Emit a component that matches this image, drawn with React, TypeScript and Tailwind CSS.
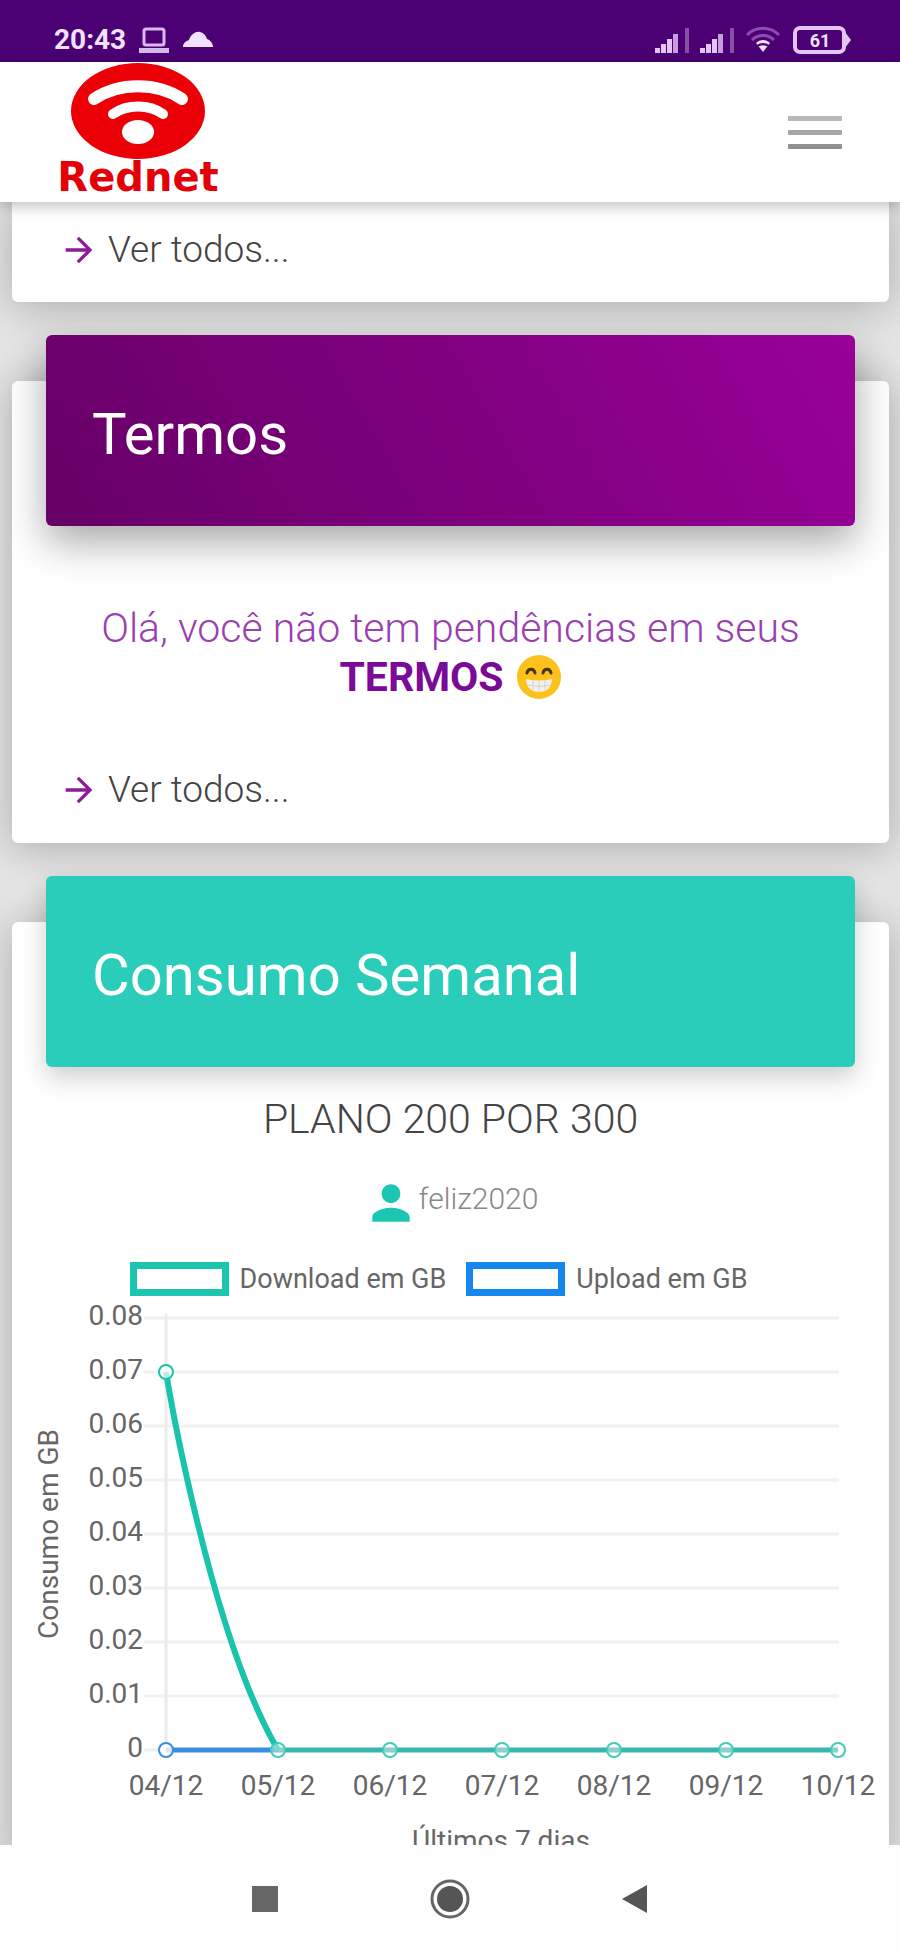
import type { ReactNode } from "react";
import { MdArrowForward, MdPerson } from "react-icons/md";

const days = ["04/12", "05/12", "06/12", "07/12", "08/12", "09/12", "10/12"];
const ticks = ["0.08", "0.07", "0.06", "0.05", "0.04", "0.03", "0.02", "0.01", "0"];

// chart geometry, in svg units
const LEFT = 154;
const STEP_X = 112;
const TOP = 22;
const STEP_Y = 54;
const BOTTOM = TOP + STEP_Y * 8;

function StatusBar() {
    return (
        <div className="flex h-[62px] shrink-0 items-end justify-between bg-[#4b0073] pr-[48px] pb-2 pl-[54px] text-[#f3e2ff]">
            <div className="flex items-center gap-3">
                <span className="text-[28px] leading-[28px] font-bold">20:43</span>
                <svg className="h-7 w-8" viewBox="0 0 32 28" fill="none" stroke="#d9b8ec" strokeWidth="3">
                    <rect x="6" y="3" width="20" height="16" rx="2" />
                    <path d="M1 24.500h30" strokeWidth="5" />
                </svg>
                <svg className="h-7 w-8" viewBox="0 0 32 28" fill="currentColor">
                    <path d="M1 21c0-4 3-6 6-7 2-6 7-9 11-8 4 1 6 4 7 7 3 1 6 4 6 8z" />
                </svg>
            </div>
            <div className="flex items-center gap-[11px]">
                <Signal />
                <Signal />
                <svg className="h-7 w-9" viewBox="0 0 36 28" fill="none" strokeWidth="3">
                    <path d="M2 9C11 0 25 0 34 9" stroke="#8a4fae" />
                    <path d="M7 14c6-6 16-6 22 0" stroke="#8a4fae" />
                    <path d="M11 17c4-4 10-4 14 0l-7 9z" fill="#f3e2ff" />
                    <path d="M12 20c4-2.500 8-2.500 12 0" stroke="#4b0073" strokeWidth="2" />
                </svg>
                <svg className="h-7 w-[60px]" viewBox="0 0 60 28">
                    <rect x="3" y="2" width="49" height="24" rx="5" fill="none" stroke="#e3c6f5" strokeWidth="4" />
                    <path d="M53 6l6 8-6 8z" fill="#e3c6f5" />
                    <text x="28" y="21" textAnchor="middle" fontSize="18" fontWeight="700" fill="#f3e2ff">61</text>
                </svg>
            </div>
        </div>
    );
}

function Signal() {
    return (
        <svg className="h-7 w-[34px]" viewBox="0 0 34 28" fill="#e3c6f5">
            <rect x="0" y="22" width="5" height="5" />
            <rect x="6" y="18" width="5" height="9" />
            <rect x="12" y="13" width="5" height="14" />
            <rect x="18" y="8" width="5" height="19" opacity="0.8" />
            <rect x="30" y="2" width="4" height="25" opacity="0.4" />
        </svg>
    );
}

function Logo() {
    return (
        <a href="#inicio" aria-label="Rednet">
            <svg className="h-[140px] w-[176px]" viewBox="0 0 176 140">
                <ellipse cx="88" cy="49" rx="67" ry="48" fill="#ec0008" />
                <g fill="none" stroke="#fff" strokeLinecap="round">
                    <path d="M44 37C69 20 107 20 132 37" strokeWidth="12" />
                    <path d="M63 52C77 42 99 42 113 52" strokeWidth="10" />
                </g>
                <ellipse cx="88" cy="70" rx="16" ry="12" fill="#fff" />
                <text x="88" y="129" textAnchor="middle" fontFamily="DejaVu Sans, sans-serif" fontWeight="700" fontSize="40" fill="#e30009">Rednet</text>
            </svg>
        </a>
    );
}

function SeeAll() {
    return (
        <a href="#todos" className="flex items-center gap-[9px] pl-[47px] text-[37px] leading-[48px] font-light text-[#444]">
            <MdArrowForward className="size-10 text-[#8e1a9c]" />
            Ver todos...
        </a>
    );
}

function Card({ title, headerClass, children }: { title: string; headerClass: string; children: ReactNode }) {
    return (
        <section className="mt-[79px] rounded-[6px] bg-white shadow-[0_4px_40px_rgba(0,0,0,0.25)]">
            <div className="px-[34px]">
                <header className={`relative -top-[46px] -mb-[46px] flex h-[191px] items-center rounded-[6px] px-[46px] pt-[6px] ${headerClass}`}>
                    <h2 className="text-[58px] leading-[64px] text-white">{title}</h2>
                </header>
            </div>
            {children}
        </section>
    );
}

function Grin() {
    return (
        <svg className="ml-3 inline-block size-[46px] align-[-9px]" viewBox="0 0 46 46" role="img" aria-label="sorriso">
            <circle cx="23" cy="23" r="22" fill="#fcc21b" />
            <path d="M11 19c1-5 7-5 8 0M27 19c1-5 7-5 8 0" fill="none" stroke="#4a3410" strokeWidth="3" strokeLinecap="round" />
            <path d="M10 25q13 3 26 0c0 9-6 13-13 13S10 34 10 25z" fill="#f4f1ea" />
            <path d="M11 31q12 3 24 0M17 26v10M23 27v11M29 26v10" fill="none" stroke="#d3d3d3" strokeWidth="1" />
        </svg>
    );
}

function Chart() {
    const xs = days.map((_, i) => LEFT + i * STEP_X);
    return (
        <svg className="block w-full" viewBox="0 0 877 570" fontSize="28" fill="#666" role="img" aria-label="Consumo em GB">
            {ticks.map((t, i) => (
                <g key={t}>
                    <line x1="132" x2="827" y1={TOP + i * STEP_Y} y2={TOP + i * STEP_Y} stroke="#f0f0f0" strokeWidth="3" />
                    <text x="131" y={TOP + i * STEP_Y + 7} textAnchor="end">{t}</text>
                </g>
            ))}
            <line x1={LEFT} x2={LEFT} y1={TOP - 4} y2={BOTTOM} stroke="#ebebeb" strokeWidth="3" />
            {days.map((d, i) => (
                <text key={d} x={xs[i]} y="499" textAnchor="middle">{d}</text>
            ))}
            <text transform="translate(46 238) rotate(-90)" textAnchor="middle">Consumo em GB</text>
            <text x="489" y="554" textAnchor="middle">Últimos 7 dias</text>

            {/* upload shows only on the first stretch, download covers the rest */}
            <line x1={xs[0]} x2={xs[1]} y1={BOTTOM} y2={BOTTOM} stroke="#3b8de0" strokeWidth="5" />
            <line x1={xs[1]} x2={xs[6]} y1={BOTTOM} y2={BOTTOM} stroke="#3ab5a9" strokeWidth="5" />
            <path
                d={`M${xs[0]} 76C${xs[0]} 76 197 337 ${xs[1]} ${BOTTOM}`}
                fill="none"
                stroke="#19c3ac"
                strokeWidth="6"
            />
            <g fill="#fff" strokeWidth="2">
                <circle cx={xs[0]} cy="76" r="7" fillOpacity="0.7" stroke="#19c3ac" />
                <circle cx={xs[0]} cy={BOTTOM} r="7" fillOpacity="0.8" stroke="#3b8de0" />
                {xs.slice(1).map((x) => (
                    <circle key={x} cx={x} cy={BOTTOM} r="7" fillOpacity="0.4" stroke="#3fcdb9" />
                ))}
            </g>
        </svg>
    );
}

export default function App() {
    return (
        <div className="flex h-screen flex-col overflow-hidden bg-[#e4e4e4] font-['Roboto',sans-serif]">
            <StatusBar />
            <nav className="relative z-10 flex h-[140px] shrink-0 items-center justify-between bg-white pr-[58px] pl-[50px] shadow-[0_4px_14px_rgba(0,0,0,0.25)]">
                <Logo />
                <button aria-label="Menu" className="flex w-[54px] flex-col gap-[9px]">
                    <span className="h-[5px] rounded-[1px] bg-[#b8b8b8]" />
                    <span className="h-[5px] rounded-[1px] bg-[#a6a6a6]" />
                    <span className="h-[5px] rounded-[1px] bg-[#909090]" />
                </button>
            </nav>

            <main className="min-h-0 flex-1 overflow-hidden pr-[11px] pl-[12px]">
                <section className="rounded-b-[6px] bg-white pt-6 pb-7 shadow-[0_4px_40px_rgba(0,0,0,0.25)]">
                    <SeeAll />
                </section>

                <Card title="Termos" headerClass="bg-linear-60 from-[#660066] to-[#990099] shadow-[0_16px_40px_rgba(0,0,0,0.35)]">
                    <p className="px-[70px] pt-[78px] text-center text-[41px] leading-[49px] font-light text-[#9a3fb0]">
                        Olá, você não tem pendências em seus <b className="font-bold text-[#7b0a99]">TERMOS</b>
                        <Grin />
                    </p>
                    <div className="pt-16 pb-[29px]">
                        <SeeAll />
                    </div>
                </Card>

                <Card title="Consumo Semanal" headerClass="bg-[#2accba] shadow-[0_10px_26px_rgba(0,0,0,0.2)]">
                    <h3 className="pt-7 text-center text-[41px] leading-[48px] font-light text-[#444]">PLANO 200 POR 300</h3>
                    <p className="flex items-center justify-center pt-8 text-[30px] font-light text-[#888]">
                        <MdPerson className="size-14 text-[#1cc7b1]" />
                        <span className="pb-2 leading-[48px]">feliz2020</span>
                    </p>
                    <div className="flex items-center justify-center gap-5 pt-[31px] pr-[24px] text-[27px] leading-[34px] text-[#666]">
                        <span className="flex gap-[11px]">
                            <i className="h-[34px] w-[99px] border-[7px] border-[#1bc5ae]" />
                            Download em GB
                        </span>
                        <span className="flex gap-[11px]">
                            <i className="h-[34px] w-[99px] border-[7px] border-[#1787f0]" />
                            Upload em GB
                        </span>
                    </div>
                    <Chart />
                </Card>
            </main>

            <footer className="relative flex h-[108px] shrink-0 items-center justify-center gap-[145px] bg-[#fefefe]">
                <button aria-label="Recentes">
                    <svg className="size-10" viewBox="0 0 40 40"><rect x="7" y="7" width="26" height="26" fill="#666" /></svg>
                </button>
                <button aria-label="Início">
                    <svg className="size-10" viewBox="0 0 40 40">
                        <circle cx="20" cy="20" r="18" fill="none" stroke="#666" strokeWidth="3" />
                        <circle cx="20" cy="20" r="13" fill="#555" />
                    </svg>
                </button>
                <button aria-label="Voltar">
                    <svg className="size-10" viewBox="0 0 40 40"><path d="M7 20L32 6v28z" fill="#555" /></svg>
                </button>
            </footer>
        </div>
    );
}
